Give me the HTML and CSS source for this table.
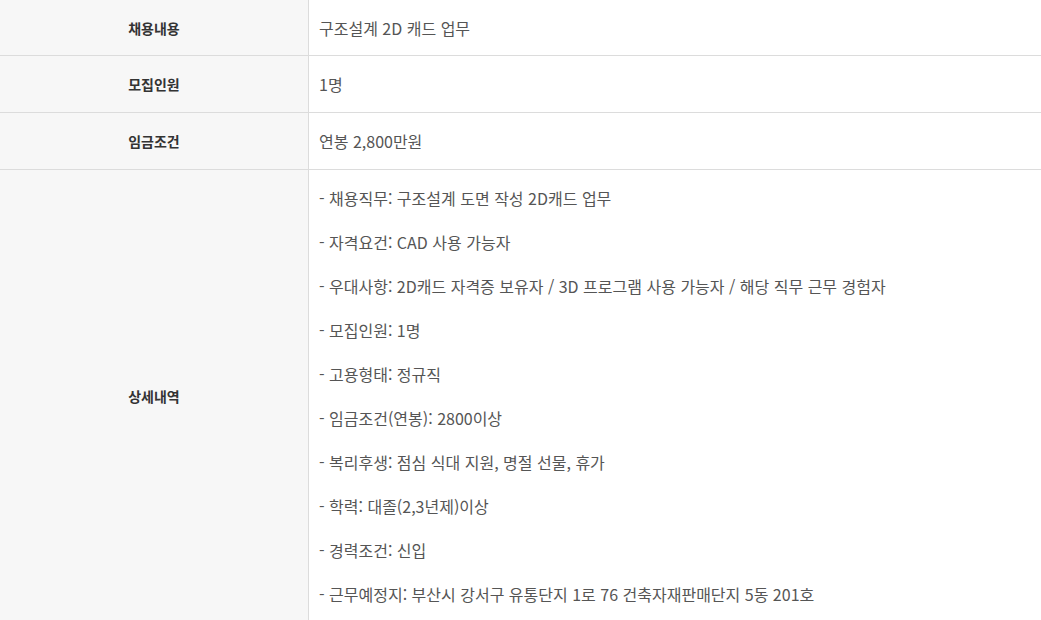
FILE: index.html
```html
<!DOCTYPE html>
<html lang="ko">
<head>
<meta charset="utf-8">
<link rel="stylesheet" href="styles.css">
</head>
<body>
<table class="info">
  <tr class="first">
    <th>채용내용</th>
    <td>구조설계 2D 캐드 업무</td>
  </tr>
  <tr>
    <th>모집인원</th>
    <td>1명</td>
  </tr>
  <tr>
    <th>임금조건</th>
    <td>연봉 2,800만원</td>
  </tr>
  <tr>
    <th>상세내역</th>
    <td class="detail">
      <p>- 채용직무: 구조설계 도면 작성 2D캐드 업무</p>
      <p>- 자격요건: CAD 사용 가능자</p>
      <p>- 우대사항: 2D캐드 자격증 보유자 / 3D 프로그램 사용 가능자 / 해당 직무 근무 경험자</p>
      <p>- 모집인원: 1명</p>
      <p>- 고용형태: 정규직</p>
      <p>- 임금조건(연봉): 2800이상</p>
      <p>- 복리후생: 점심 식대 지원, 명절 선물, 휴가</p>
      <p>- 학력: 대졸(2,3년제)이상</p>
      <p>- 경력조건: 신입</p>
      <p>- 근무예정지: 부산시 강서구 유통단지 1로 76 건축자재판매단지 5동 201호</p>
    </td>
  </tr>
</table>
</body>
</html>
```

FILE: styles.css
```css
html, body {
  margin: 0;
  padding: 0;
  background: #fff;
}
body {
  font-family: "Noto Sans CJK KR", "Noto Sans", sans-serif;
  color: #444;
}
.info {
  width: 1042px;
  border-collapse: collapse;
  table-layout: fixed;
}
.info th,
.info td {
  border-bottom: 1px solid #dcdcdc;
  height: 56px;
  padding: 0 10px;
  vertical-align: middle;
}
.info .first th,
.info .first td {
  height: 55px;
}
.info th {
  width: 288px;
  background: #f7f7f7;
  border-right: 1px solid #dcdcdc;
  font-size: 14px;
  font-weight: 700;
  color: #333;
  text-align: center;
}
.info td {
  font-size: 16px;
  color: #555;
  text-align: left;
}
.info td.detail {
  padding: 16px 10px;
}
.detail p {
  margin: 0 0 20px;
  line-height: 24px;
}
.detail p:last-child {
  margin-bottom: 0;
}
```
